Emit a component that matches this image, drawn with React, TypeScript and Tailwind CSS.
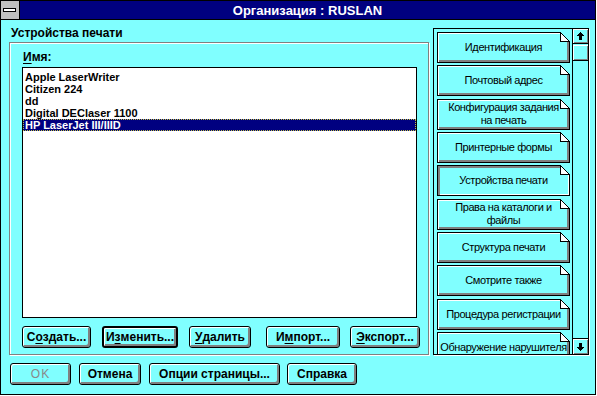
import React from "react";

const F = "font-['Liberation_Sans',Arial,sans-serif]";

function Btn({
  w,
  children,
  def = false,
  disabled = false,
}: {
  w: string;
  children: React.ReactNode;
  def?: boolean;
  disabled?: boolean;
}) {
  return (
    <div
      className={`${w} h-[22px] shrink-0 rounded-[3px] border-black ${
        def ? "border-2" : "border"
      } bg-[#80ffff] shadow-[inset_1px_1px_0_#fff,inset_-2px_-2px_0_#808080] flex items-center justify-center text-[12px] font-bold leading-none ${
        disabled ? "text-[#8a8a8a]" : "text-black"
      }`}
    >
      {children}
    </div>
  );
}

function DogEar() {
  return (
    <svg
      className="absolute -top-px -right-px"
      width="10"
      height="10"
      viewBox="0 0 10 10"
      shapeRendering="crispEdges"
    >
      <polygon points="0,0 10,0 10,10" fill="#80ffff" />
      <polygon points="0,0 10,10 0,10" fill="#ffffff" />
      <path d="M0.5 0 L0.5 9.5 L10 9.5" stroke="black" fill="none" />
      <path d="M0 0 L10 10" stroke="black" fill="none" shapeRendering="auto" />
    </svg>
  );
}

function Tab({ lines, selected = false }: { lines: string[]; selected?: boolean }) {
  return (
    <div
      className={`relative h-[31px] shrink-0 border border-black bg-[#80ffff] flex flex-col items-center justify-center text-[11px] leading-[13px] tracking-[-0.4px] text-black ${
        selected
          ? "shadow-[inset_2px_2px_0_#808080,inset_-1px_-1px_0_#fff]"
          : "shadow-[inset_1px_1px_0_#fff,inset_-2px_-2px_0_#808080]"
      }`}
    >
      {lines.map((l, i) => (
        <span key={i} className="whitespace-nowrap">
          {l}
        </span>
      ))}
      <DogEar />
    </div>
  );
}

function Arrow({ up }: { up: boolean }) {
  return (
    <svg width="7" height="8" viewBox="0 0 7 8" shapeRendering="crispEdges">
      {up ? (
        <path d="M3 0h1v1h1v1h1v1h1v1H5v4H2V4H0V3h1V2h1V1h1z" fill="black" />
      ) : (
        <path d="M2 0h3v4h2v1H6v1H5v1H4v1H3V7H2V6H1V5H0V4h2z" fill="black" />
      )}
    </svg>
  );
}

export default function App() {
  const items = [
    "Apple LaserWriter",
    "Citizen 224",
    "dd",
    "Digital DEClaser 1100",
    "HP LaserJet III/IIID",
  ];
  const tabs: { lines: string[]; selected?: boolean }[] = [
    { lines: ["Идентификация"] },
    { lines: ["Почтовый адрес"] },
    { lines: ["Конфигурация задания", "на печать"] },
    { lines: ["Принтерные формы"] },
    { lines: ["Устройства печати"], selected: true },
    { lines: ["Права на каталоги и", "файлы"] },
    { lines: ["Структура печати"] },
    { lines: ["Смотрите также"] },
    { lines: ["Процедура регистрации"] },
    { lines: ["Обнаружение нарушителя"] },
  ];
  return (
    <div className={`w-[597px] h-[396px] bg-white ${F}`}>
      <div className="w-[596px] h-[395px] border border-black bg-[#80ffff] flex flex-col">
        {/* Title bar */}
        <div className="h-[19px] flex border-b border-black shrink-0">
          <div className="w-[19px] h-[18px] bg-[#c0c0c0] border-r border-black flex items-center justify-center shrink-0">
            <div className="w-[13px] h-[4px] bg-white border border-black -mt-[1px] -ml-[2px]" />
          </div>
          <div className="flex-1 bg-[#000080] text-white font-bold text-[13px] flex items-center justify-center leading-none">
            Организация : RUSLAN
          </div>
        </div>

        {/* Body */}
        <div className="flex">
          {/* Left */}
          <div className="pl-[8px] flex flex-col">
            <div className="h-[22px] pt-[7px] pl-[2px] text-[12px] leading-[12px] font-bold text-black">
              Устройства печати
            </div>
            <div className="w-[420px] h-[313px] border border-[#808080] shadow-[inset_1px_1px_0_#fff,1px_1px_0_#fff] pl-[12px] flex flex-col">
              <div className="h-[24px] pt-[8px] pl-[1px] text-[12px] leading-[12px] font-bold text-black">
                <span className="underline underline-offset-[2px]">И</span>мя:
              </div>
              <div className="w-[395px] h-[251px] border border-black bg-white pt-[3px] flex flex-col">
                {items.map((it, i) => {
                  const sel = i === items.length - 1;
                  return (
                    <div
                      key={it}
                      className={`h-[12px] leading-[12px] text-[11px] font-bold pl-[2px] ${
                        sel
                          ? "bg-[#000080] text-white outline-1 outline-dotted outline-[#c0c040] -outline-offset-1"
                          : "text-black"
                      }`}
                    >
                      {it}
                    </div>
                  );
                })}
              </div>
              <div className="mt-[8px] flex">
                <Btn w="w-[69px]">
                  С<span className="underline underline-offset-[2px]">о</span>здать...
                </Btn>
                <div className="w-[11px] shrink-0" />
                <Btn w="w-[76px]" def>
                  И<span className="underline underline-offset-[2px]">з</span>менить...
                </Btn>
                <div className="w-[11px] shrink-0" />
                <Btn w="w-[62px]">
                  <span className="underline underline-offset-[2px]">У</span>далить
                </Btn>
                <div className="w-[15px] shrink-0" />
                <Btn w="w-[74px]">
                  И<span className="underline underline-offset-[2px]">м</span>порт...
                </Btn>
                <div className="w-[10px] shrink-0" />
                <Btn w="w-[70px]">
                  <span className="underline underline-offset-[2px]">Э</span>кспорт...
                </Btn>
              </div>
            </div>
          </div>

          {/* Right panel */}
          <div className="ml-[4px] mt-[8px] w-[156px] h-[327px] border border-black shadow-[1px_1px_0_#fff] flex">
            <div className="pl-[3px] pt-[3px] w-[138px] flex flex-col gap-[2.33px] overflow-hidden">
              {tabs.map((t, i) => (
                <div key={i} className="w-[133px]">
                  <Tab lines={t.lines} selected={t.selected} />
                </div>
              ))}
            </div>
            <div className="w-[16px] border-l border-black flex flex-col">
              <div className="h-[15px] border-b border-black shadow-[inset_1px_1px_0_#fff,inset_-1px_-1px_0_#808080] flex items-center justify-center">
                <Arrow up />
              </div>
              <div className="h-[16px] border-b border-black mt-[1px] shadow-[inset_1px_1px_0_#fff,inset_-1px_-1px_0_#808080]" />
              <div className="flex-1" />
              <div className="h-[16px] border-t border-black shadow-[inset_1px_1px_0_#fff,inset_-1px_-1px_0_#808080] flex items-center justify-center">
                <Arrow up={false} />
              </div>
            </div>
          </div>
        </div>

        {/* Bottom buttons */}
        <div className="mt-[8px] pl-[9px] flex">
          <Btn w="w-[61px]" disabled>
            <span className="font-normal tracking-[1px]">OK</span>
          </Btn>
          <div className="w-[8px] shrink-0" />
          <Btn w="w-[62px]">Отмена</Btn>
          <div className="w-[8px] shrink-0" />
          <Btn w="w-[131px]">Опции страницы...</Btn>
          <div className="w-[7px] shrink-0" />
          <Btn w="w-[70px]">Справка</Btn>
        </div>
      </div>
    </div>
  );
}
